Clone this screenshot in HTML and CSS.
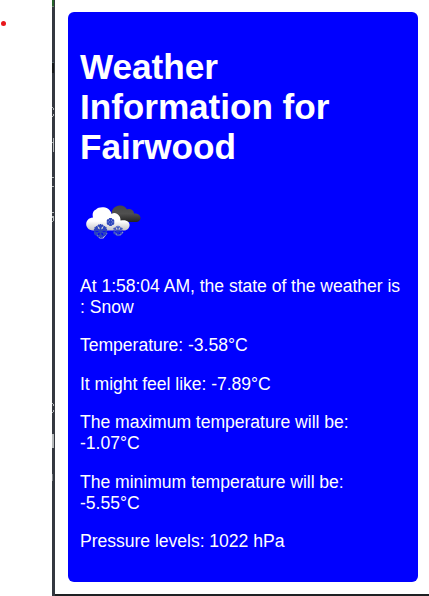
FILE: index.html
```html
<!DOCTYPE html>
<html lang="en">
<head>
<meta charset="utf-8">
<title>Weather Information</title>
<link rel="stylesheet" href="styles.css">
</head>
<body>
<div class="page">
  <aside class="gutter"><span class="dot"></span></aside>
  <svg class="edge" width="3" height="596" viewBox="0 0 3 596" aria-hidden="true">
    <rect width="3" height="596" fill="#343840"/>
    <rect width="2" height="6" fill="#28622b"/>
    <rect y="6" width="2" height="1" fill="#668068"/>
    <rect y="62" width="2" height="1" fill="#4d5c60"/>
    <rect y="63" width="2" height="10" fill="#17191b"/>
    <g fill="#b4b7b9">
      <path d="M0 107h1v1H0zM1 108h1v2H1zM1 114h1v2H1zM0 116h1v1H0z"/>
      <path d="M1 138h1v14H1zM0 142h1v1H0z"/>
      <path d="M0 177h2v1H0zM0 186h2v1H0z"/>
      <path d="M0 212h2v1H0zM0 216h2v2H0zM1 218h1v3H1zM0 221h1v1H0z"/>
      <path d="M0 403h1v1H0zM1 404h1v2H1zM1 410h1v2H1zM0 412h1v1H0z"/>
      <path d="M0 434h2v14H0z"/>
    </g>
    <path d="M0 474h1v7H0z" fill="#777b80"/>
  </svg>
  <main class="content">
    <section class="card">
      <h1 class="title">Weather Information for Fairwood</h1>
      <svg class="icon" width="62" height="60" viewBox="0 0 62 60" role="img" aria-label="Snow">
        <defs>
          <linearGradient id="dark" x1="0" y1="0" x2="0" y2="1">
            <stop offset="0" stop-color="#484848"/><stop offset=".5" stop-color="#505050"/><stop offset="1" stop-color="#222"/>
          </linearGradient>
          <linearGradient id="light" x1="0" y1="0" x2="0" y2="1">
            <stop offset="0.6" stop-color="#fff"/><stop offset="1" stop-color="#c2c2c6"/>
          </linearGradient>
          <g id="flake" fill="none" stroke="#2c45bd">
            <path d="M0-7V7M-6-3.5L6 3.5M-6 3.5L6-3.5M-2.5-6L0-3.5L2.5-6M-2.5 6L0 3.5L2.5 6M-6.5-1L-3-1.8L-4-5M6.5-1L3-1.8L4-5M-6.5 1L-3 1.8L-4 5M6.5 1L3 1.8L4 5"/>
          </g>
        </defs>
        <path d="M32 27C30 20 34 15 39 14.5C43 14 46 16 47 18.5C51 17 54 20 54 22.5C58 22 60.5 24.5 60.5 27C60.5 29.5 58 31 56 31H42Z" fill="url(#dark)"/>
        <path d="M13 39.5C4 39 4 27 13 26.5C12 22 13.5 19.5 16 18.5C19 15 30 15 31.5 23C36 20 41 25 40.5 29.5C52 27 52 39 44 39.5Z" fill="url(#light)"/>
        <g stroke="#c2c5d8" stroke-width="1.2" fill="none">
          <path d="M15 42l5 5h3l4-5M34 41l3 3h3l3-3"/>
        </g>
        <use href="#flake" transform="translate(20.5 40)" stroke-width="1.8"/>
        <use href="#flake" transform="translate(30.5 31) scale(.58)" stroke-width="2.4"/>
        <use href="#flake" transform="translate(38 40) scale(.76)" stroke-width="1.6" opacity=".85"/>
      </svg>
      <p>At 1:58:04 AM, the state of the weather is : Snow</p>
      <p>Temperature: -3.58°C</p>
      <p>It might feel like: -7.89°C</p>
      <p>The maximum temperature will be: -1.07°C</p>
      <p>The minimum temperature will be: -5.55°C</p>
      <p>Pressure levels: 1022 hPa</p>
    </section>
  </main>
</div>
</body>
</html>
```
FILE: styles.css
```css
* { box-sizing: border-box; }
body {
  margin: 0;
  background: #fff;
  color: #fff;
  font-family: "Liberation Sans", Arial, sans-serif;
}
.page {
  display: grid;
  grid-template-columns: 52px 3px 1fr;
  height: 596px;
  overflow: hidden;
}
.gutter { padding: 21px 0 0 1px; }
.dot {
  display: block;
  width: 5px;
  height: 5px;
  border-radius: 50%;
  background: #e8171b;
}
.edge { display: block; }
.content {
  padding: 12px 11px 12px 13px;
  border-bottom: 2px solid #1e2022;
}
.card {
  height: 570px;
  padding: 35px 12px 0;
  border-radius: 6px;
  background: #00f;
}
.title {
  margin: 0 0 24px;
  font-size: 35.2px;
  line-height: 40px;
  letter-spacing: -0.06px;
}
.icon { display: block; margin-bottom: 24.5px; }
p {
  margin: 0 0 17.5px;
  font-size: 17.6px;
  line-height: 21px;
  letter-spacing: -0.04px;
}
```
